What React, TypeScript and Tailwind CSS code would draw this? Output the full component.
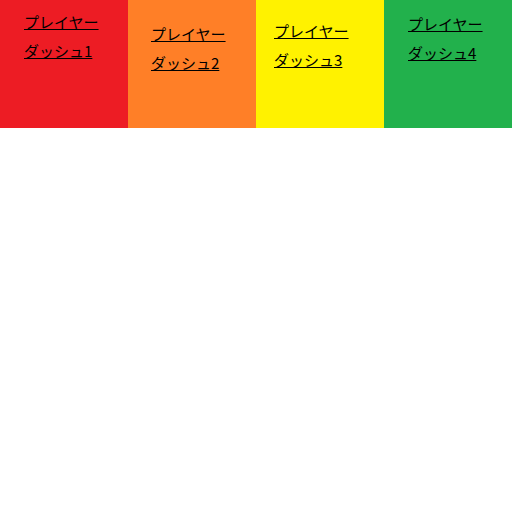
export default function App() {
  const boxes = [
    { bg: "bg-[#ed1c24]", pad: "pl-[24px] pt-[7px]", n: "1" },
    { bg: "bg-[#ff7f27]", pad: "pl-[23px] pt-[19px]", n: "2" },
    { bg: "bg-[#fff200]", pad: "pl-[18px] pt-[16px]", n: "3" },
    { bg: "bg-[#22b14c]", pad: "pl-[24px] pt-[9px]", n: "4" },
  ];
  return (
    <div className="flex" style={{ fontFamily: '"Noto Sans CJK JP", "Noto Sans", sans-serif' }}>
      {boxes.map((b) => (
        <div key={b.n} className={`w-[128px] h-[128px] ${b.bg} ${b.pad}`}>
          <a href="#" className="block text-[15px] leading-[29px] text-black underline">
            プレイヤー
            <br />
            ダッシュ{b.n}
          </a>
        </div>
      ))}
    </div>
  );
}
